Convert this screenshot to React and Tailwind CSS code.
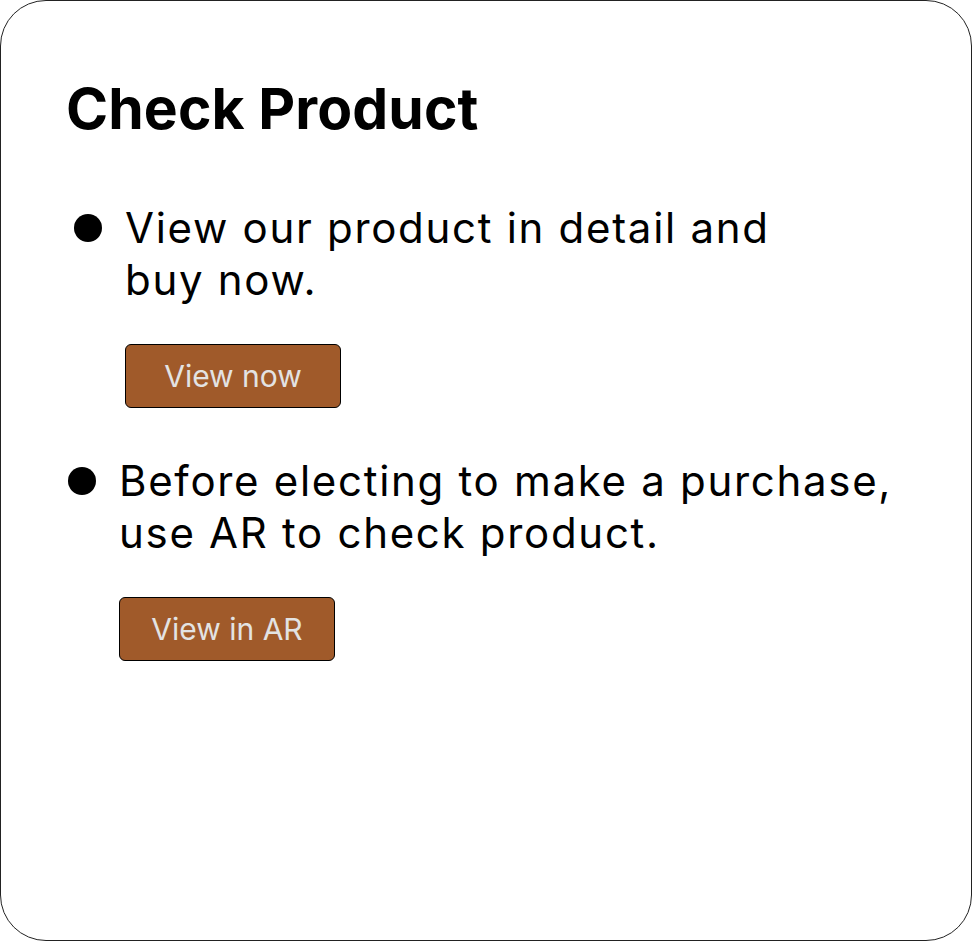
import React from 'react';

const items = [
  { id: 1, lines: ['View our product in detail and', 'buy now.'], button: 'View now', shift: 'ml-[6px]' },
  { id: 2, lines: ['Before electing to make a purchase,', 'use AR to check product.'], button: 'View in AR', shift: 'ml-0' },
];

const App = () => {
  return (
    <div className="w-[972px] h-[941px] bg-white" style={{ fontFamily: 'Inter, "Noto Sans", sans-serif' }}>
      <div className="w-full h-full border border-[#222] rounded-[46px] pl-[67px] pt-[78px]">
        <h1 className="-ml-[2px] text-[57px] leading-[60px] font-bold text-black tracking-[0.1px]">Check Product</h1>
        <ul className="mt-[63px] flex flex-col gap-[47px]">
          {items.map(item => (
            <li key={item.id} className={item.shift}>
              <div className="flex items-start">
                <div className="w-7 h-7 rounded-full bg-black mt-[12px] shrink-0"></div>
                <p className="ml-[23px] text-[42px] leading-[52px] tracking-[1.7px] text-black">
                  {item.lines[0]}<br />{item.lines[1]}
                </p>
              </div>
              <button className="ml-[51px] mt-[38px] w-[216px] h-[64px] bg-[#a05a2a] border border-black rounded-[6px] text-[#e3e3e3] text-[30px]">
                {item.button}
              </button>
            </li>
          ))}
        </ul>
      </div>
    </div>
  );
};

export default App;
